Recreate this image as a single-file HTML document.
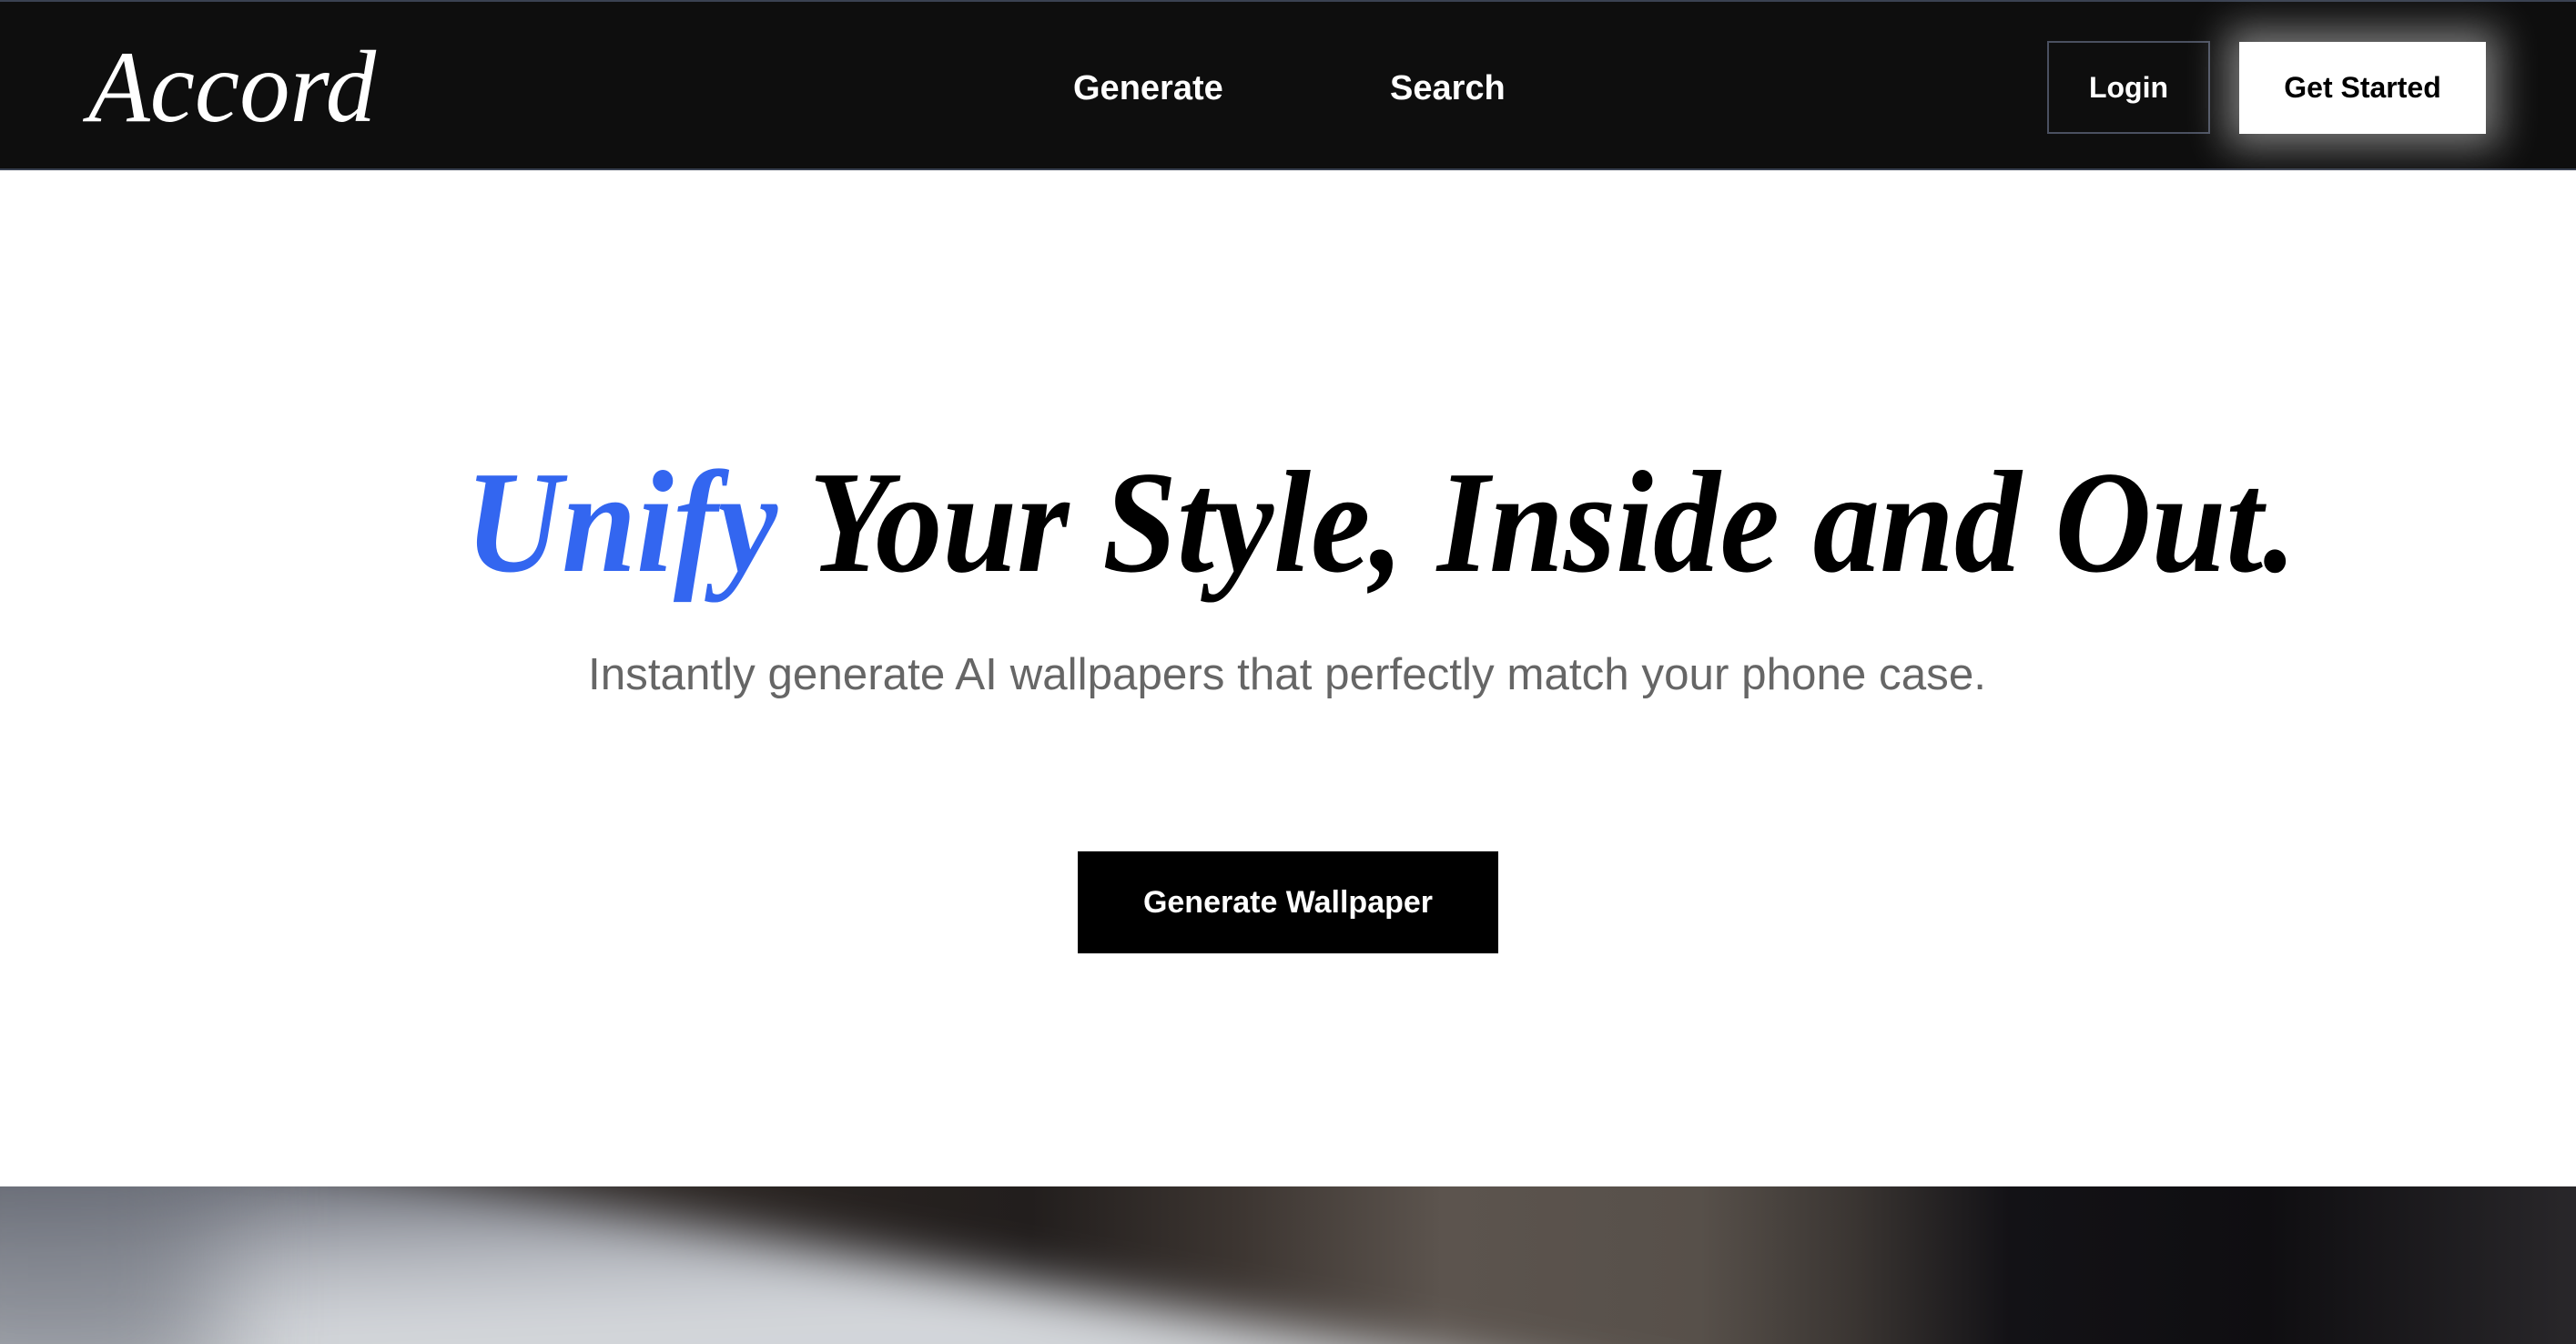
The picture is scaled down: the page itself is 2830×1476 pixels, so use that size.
<!DOCTYPE html>
<html><head><meta charset="utf-8"><style>
html,body{margin:0;padding:0;}
body{width:2830px;height:1476px;overflow:hidden;background:#fff;position:relative;font-family:"Liberation Sans",sans-serif;}
.hdr{position:absolute;left:0;top:0;width:2830px;height:187px;background:#0e0e0e;border-top:2px solid #3a4252;border-bottom:2px solid #3a4252;box-sizing:border-box;}
.nav{position:absolute;top:70px;color:#fff;font-size:38px;font-weight:bold;line-height:50px;}
.login{position:absolute;left:2249px;top:43px;width:179px;height:102px;border:2px solid #4a5060;box-sizing:border-box;color:#fff;font-size:32px;font-weight:bold;display:flex;align-items:center;justify-content:center;}
.gs{position:absolute;left:2460px;top:44px;width:271px;height:101px;background:#fff;color:#000;font-size:32px;font-weight:bold;display:flex;align-items:center;justify-content:center;box-shadow:0 0 40px 14px rgba(255,255,255,0.45);}
.btn{position:absolute;left:1184px;top:935px;width:462px;height:112px;background:#000;color:#fff;font-size:34px;font-weight:bold;display:flex;align-items:center;justify-content:center;}
</style></head><body>
<div class="hdr">
<svg style="position:absolute;left:0;top:0" width="500" height="180"><text x="97" y="131" textLength="316" lengthAdjust="spacingAndGlyphs" font-family="Liberation Serif" font-style="italic" font-size="112" fill="#fff">Accord</text></svg>
<div class="nav" style="left:1179px">Generate</div>
<div class="nav" style="left:1527px">Search</div>
<div class="login">Login</div>
<div class="gs">Get Started</div>
</div>
<svg style="position:absolute;left:0;top:440px" width="2830" height="420">
<text x="511" y="187" textLength="2012" lengthAdjust="spacingAndGlyphs" font-family="Liberation Serif" font-style="italic" font-weight="bold" font-size="160" fill="#000"><tspan fill="#3366f0">Unify</tspan> Your Style, Inside and Out.</text>
<text x="646" y="317" textLength="1536" lengthAdjust="spacingAndGlyphs" font-family="Liberation Sans" font-size="49" fill="#666">Instantly generate AI wallpapers that perfectly match your phone case.</text>
</svg>
<div class="btn">Generate Wallpaper</div>
<svg style="position:absolute;left:0;top:1303px" width="2830" height="173">
<defs>
<linearGradient id="base" x1="0" x2="1" y1="0" y2="0">
<stop offset="0" stop-color="#2a2624"/>
<stop offset="0.25" stop-color="#2c2623"/>
<stop offset="0.40" stop-color="#221e1d"/>
<stop offset="0.48" stop-color="#3c3531"/>
<stop offset="0.56" stop-color="#5c544e"/>
<stop offset="0.66" stop-color="#57504a"/>
<stop offset="0.72" stop-color="#3a3532"/>
<stop offset="0.78" stop-color="#131216"/>
<stop offset="0.88" stop-color="#0f0e11"/>
<stop offset="1" stop-color="#29272a"/>
</linearGradient>
<linearGradient id="light" x1="0" x2="0.25" y1="0" y2="1">
<stop offset="0" stop-color="#55585f"/>
<stop offset="0.2" stop-color="#6f727c"/>
<stop offset="0.5" stop-color="#b4b7be"/>
<stop offset="0.75" stop-color="#d5d8dc"/>
<stop offset="1" stop-color="#d0d3d7"/>
</linearGradient>
<filter id="b" x="-50%" y="-50%" width="200%" height="200%"><feGaussianBlur stdDeviation="28"/></filter>
<filter id="b2" x="-100%" y="-100%" width="300%" height="300%"><feGaussianBlur stdDeviation="60"/></filter>
</defs>
<rect width="2830" height="173" fill="url(#base)"/>
<polygon points="-100,-60 185,-60 1876,240 -100,240" fill="url(#light)" filter="url(#b)"/>
<rect x="-120" y="-60" width="360" height="300" fill="#666a75" opacity="0.6" filter="url(#b2)"/>
</svg>
</body></html>
